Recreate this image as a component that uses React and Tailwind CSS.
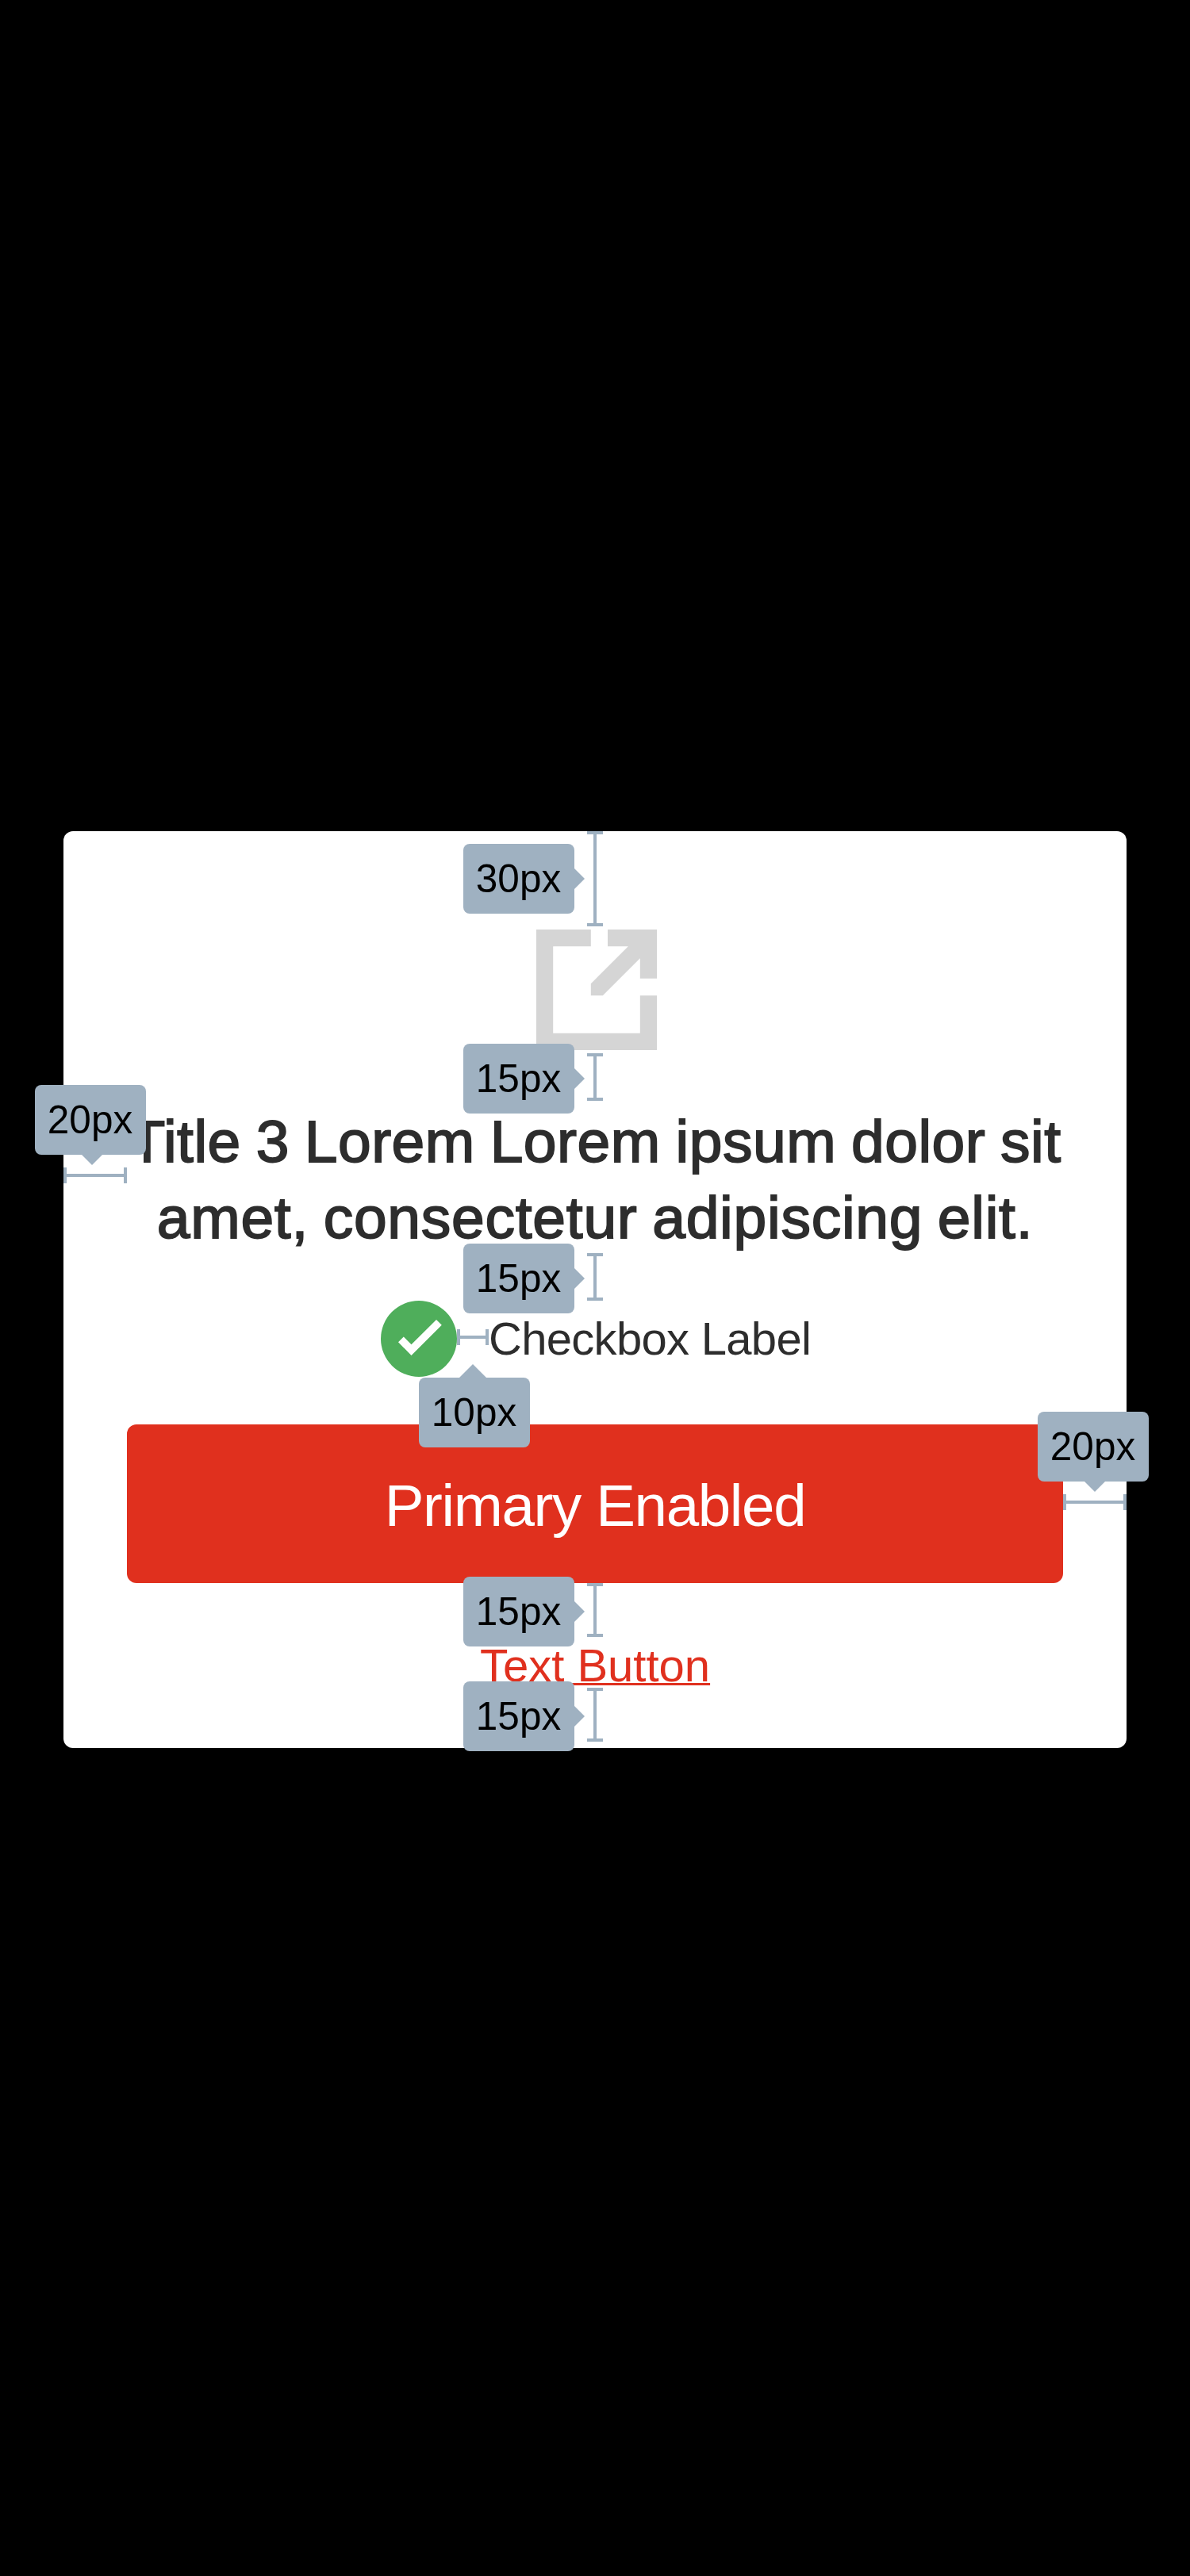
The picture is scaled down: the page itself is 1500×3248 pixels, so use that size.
function ExternalIcon() {
  return (
    <svg className="ml-[4px] h-[152px] w-[152px] shrink-0" viewBox="0 0 152 152" fill="#d5d5d5" aria-hidden="true">
      <path d="M0 0H68.8V21.2H21.2V130.8H130.8V83.2H152V152H0Z" />
      <path d="M90 0H152V61.8H130.8V36.2L83.8 83.2H68.8V68.2L115.8 21.2H90Z" />
    </svg>
  );
}

function CheckBadge() {
  return (
    <svg className="h-[96px] w-[96px] shrink-0" viewBox="0 0 96 96" aria-hidden="true">
      <circle cx="48" cy="48" r="48" fill="#4fae5b" />
      <path d="M22 52.3L28.8 45.6L38.5 55.3L70 24L76.8 30.7L38.5 69Z" fill="#fff" />
    </svg>
  );
}

const arrows = {
  right: { box: "top-[31px] left-[140px] h-[26px] w-[13px]", view: "0 0 13 26", d: "M0 0L13 13L0 26Z" },
  down: { box: "top-[88px] left-[59px] h-[13px] w-[26px]", view: "0 0 26 13", d: "M0 0H26L13 13Z" },
  up: { box: "top-[-17px] left-[51px] h-[17px] w-[34px]", view: "0 0 34 17", d: "M0 17L17 0L34 17Z" },
};

// Callout that floats beside a measuring line.
function Tag({ className, arrow, children }) {
  const { box, view, d } = arrows[arrow];
  return (
    <div
      className={`absolute z-10 flex h-[88px] w-[140px] items-center justify-center rounded-[8px] bg-[#9fb1c1] pr-[1px] text-[49.5px] leading-none tracking-normal whitespace-nowrap text-black ${className}`}
    >
      {children}
      <svg className={`absolute ${box}`} viewBox={view} fill="#9fb1c1">
        <path d={d} />
      </svg>
    </div>
  );
}

function VRule({ className, tagClass, label }) {
  return (
    <div className={`relative flex w-[20px] shrink-0 flex-col items-center ${className}`}>
      <div className="h-[4px] w-full bg-[#9fb1c1]" />
      <div className="w-[4px] flex-1 bg-[#9fb1c1]" />
      <div className="h-[4px] w-full bg-[#9fb1c1]" />
      <Tag className={`right-[36px] ${tagClass}`} arrow="right">{label}</Tag>
    </div>
  );
}

function HRule({ className, children }) {
  return (
    <div className={`relative flex h-[20px] shrink-0 items-center ${className}`}>
      <div className="h-full w-[4px] bg-[#9fb1c1]" />
      <div className="h-[4px] flex-1 bg-[#9fb1c1]" />
      <div className="h-full w-[4px] bg-[#9fb1c1]" />
      {children}
    </div>
  );
}

export default function App() {
  return (
    <main className="flex h-[3248px] w-[1500px] flex-col items-center bg-black pt-[1048px] font-['Liberation_Sans',Arial,sans-serif]">
      <section className="flex h-[1156px] w-[1340px] flex-col items-center rounded-[12px] bg-white">
        <VRule className="mb-[4px] h-[120px]" tagClass="top-[16px]" label="30px" />

        <ExternalIcon />

        <VRule className="mt-[4px] mb-[2px] h-[60px]" tagClass="top-[-12px]" label="15px" />

        <div className="flex w-full items-center pr-[80px]">
          <HRule className="mb-[8px] w-[80px]">
            <Tag className="bottom-[36px] left-[-36px]" arrow="down">20px</Tag>
          </HRule>
          <h1 className="flex h-[192px] flex-1 flex-col items-center pt-[1px] text-[75px] leading-[96px] whitespace-nowrap text-[#2d2d2d] [-webkit-text-stroke:1.8px_#2d2d2d]">
            <span className="tracking-[0.5px] [word-spacing:-2.5px]">Title 3 Lorem Lorem ipsum dolor sit</span>
            <span className="tracking-[0.75px] [word-spacing:-3px]">amet, consectetur adipiscing elit.</span>
          </h1>
        </div>

        <VRule className="mt-[-2px] h-[60px]" tagClass="top-[-12px]" label="15px" />

        <label className="flex h-[96px] items-center text-[58px] leading-none tracking-[-0.7px] whitespace-nowrap text-[#2d2d2d]">
          <CheckBadge />
          <HRule className="mb-[4px] w-[40px]">
            <Tag className="top-[61px] left-[-48px]" arrow="up">10px</Tag>
          </HRule>
          <span className="w-[404px]">Checkbox Label</span>
        </label>

        <div className="mt-[60px] flex w-full items-center pl-[80px]">
          <button className="flex h-[200px] flex-1 items-center justify-center rounded-[12px] bg-[#e0301e] pt-[7px] text-[74.5px] leading-none tracking-[-1.35px] text-white">
            Primary Enabled
          </button>
          <HRule className="mb-[4px] w-[80px]">
            <Tag className="bottom-[36px] left-[-32px]" arrow="down">20px</Tag>
          </HRule>
        </div>

        <VRule className="mb-[4px] h-[68px]" tagClass="top-[-8px]" label="15px" />

        <a className="text-[58px] leading-[64px] whitespace-nowrap text-[#e0301e] underline decoration-[3px] underline-offset-[2px] [text-decoration-skip-ink:none]">
          Text Button
        </a>

        <VRule className="mt-[-4px] h-[68px]" tagClass="top-[-8px]" label="15px" />
      </section>
    </main>
  );
}
